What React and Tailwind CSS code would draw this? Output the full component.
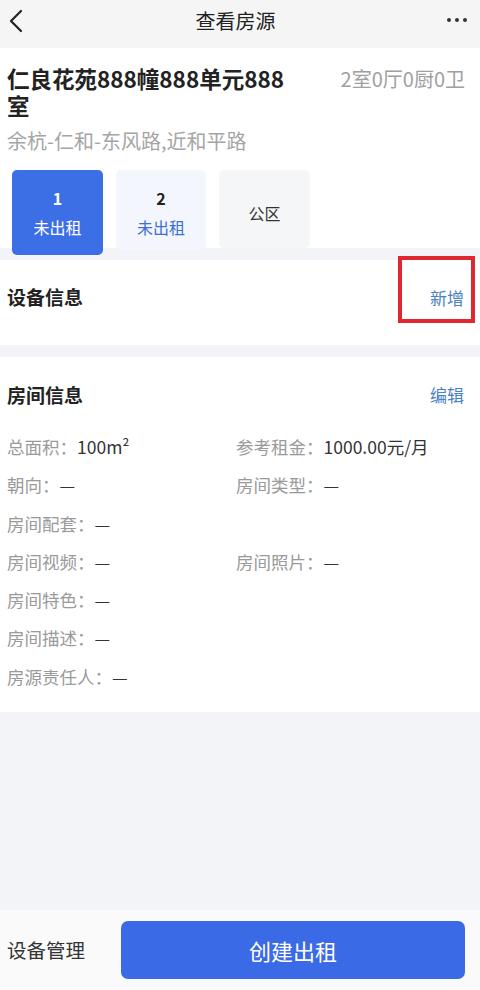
import React from "react";

const font = { fontFamily: '"Noto Sans CJK SC", "Noto Sans", sans-serif' };

const rows = [
  [{ label: "总面积：", value: "100m²" }, { label: "参考租金：", value: "1000.00元/月" }],
  [{ label: "朝向：", value: "—" }, { label: "房间类型：", value: "—" }],
  [{ label: "房间配套：", value: "—" }],
  [{ label: "房间视频：", value: "—" }, { label: "房间照片：", value: "—" }],
  [{ label: "房间特色：", value: "—" }],
  [{ label: "房间描述：", value: "—" }],
  [{ label: "房源责任人：", value: "—" }],
];

const Field = ({ label, value }) => (
  <div className="text-[17.5px] leading-[24px]">
    <span className="text-[#9a9a9a]">{label}</span>
    <span className="text-[#333]">{value}</span>
  </div>
);

const App = () => {
  return (
    <div className="w-[480px] h-[990px] bg-[#f3f4f8] flex flex-col overflow-hidden" style={font}>
      {/* header */}
      <div className="h-[48px] bg-[#f5f5f5] flex items-center justify-between px-[7px] shrink-0">
        <svg width="16" height="24" viewBox="0 0 16 24" fill="none" className="ml-[1px] -mt-[7px]">
          <path d="M13 2 L3 12 L13 22" stroke="#222" strokeWidth="2.2" strokeLinecap="round" strokeLinejoin="round" />
        </svg>
        <div className="text-[20px] text-[#222] -mt-[7px]">查看房源</div>
        <div className="flex gap-[4px] mr-[6px] -mt-[8px]">
          <span className="w-[4px] h-[4px] rounded-full bg-[#333]" />
          <span className="w-[4px] h-[4px] rounded-full bg-[#333]" />
          <span className="w-[4px] h-[4px] rounded-full bg-[#333]" />
        </div>
      </div>

      {/* house card */}
      <div className="bg-white px-[7px] pt-[17px] h-[200px] shrink-0">
        <div className="flex justify-between">
          <div className="w-[294px] text-[22.5px] leading-[27px] font-bold text-[#222]">
            仁良花苑888幢888单元888室
          </div>
          <div className="text-[20px] leading-[27px] text-[#a0a0a0] mr-[8px]">2室0厅0厨0卫</div>
        </div>
        <div className="mt-[8px] text-[20px] leading-[28px] text-[#a5a5a5]">余杭-仁和-东风路,近和平路</div>
        <div className="mt-[15px] ml-[5px] flex items-start gap-[13px] relative">
          <div className="w-[91px] h-[85px] rounded-[5px] bg-[#3c6fe6] flex flex-col items-center justify-center text-white">
            <div className="text-[16px] font-bold leading-[22px]">1</div>
            <div className="text-[16px] leading-[22px] mt-[7px]">未出租</div>
          </div>
          <div className="w-[90px] h-[80px] rounded-[5px] bg-[#f3f6fc] flex flex-col items-center justify-center">
            <div className="text-[16px] font-bold leading-[22px] text-[#222] mt-[5px]">2</div>
            <div className="text-[16px] leading-[22px] mt-[7px] text-[#3d6fd6]">未出租</div>
          </div>
          <div className="w-[91px] h-[78px] rounded-[5px] bg-[#f5f6f8] flex items-center justify-center text-[16px] text-[#333] pt-[8px]">
            公区
          </div>
        </div>
      </div>

      {/* device info */}
      <div className="mt-[12px] bg-white h-[85px] px-[7px] flex items-center justify-between relative shrink-0">
        <div className="text-[19px] font-bold text-[#222] -mt-[10px]">设备信息</div>
        <div className="text-[17px] text-[#4a80c4] mr-[9px] -mt-[10px]">新增</div>
        <div className="absolute left-[398px] top-[-4px] w-[77px] h-[67px] border-[4px] border-[#e0262f]" />
      </div>

      {/* room info */}
      <div className="mt-[12px] bg-white h-[355px] px-[7px] pt-[25px] shrink-0">
        <div className="flex justify-between items-center">
          <div className="text-[19px] font-bold text-[#222] leading-[26px]">房间信息</div>
          <div className="text-[17px] text-[#4a80c4] mr-[9px]">编辑</div>
        </div>
        <div className="mt-[27px] flex flex-col gap-[14.3px]">
          {rows.map((row, i) => (
            <div key={i} className="grid grid-cols-[229px_1fr]">
              {row.map((f) => (
                <Field key={f.label} {...f} />
              ))}
            </div>
          ))}
        </div>
      </div>

      <div className="flex-1" />

      {/* bottom bar */}
      <div className="h-[80px] bg-[#fafafa] flex items-center px-[7px] shrink-0">
        <div className="text-[19.5px] text-[#333] w-[114px]">设备管理</div>
        <button className="flex-1 mr-[8px] h-[58px] rounded-[7px] bg-[#3a6ae6] text-white text-[22px]">
          创建出租
        </button>
      </div>
    </div>
  );
};

export default App;
